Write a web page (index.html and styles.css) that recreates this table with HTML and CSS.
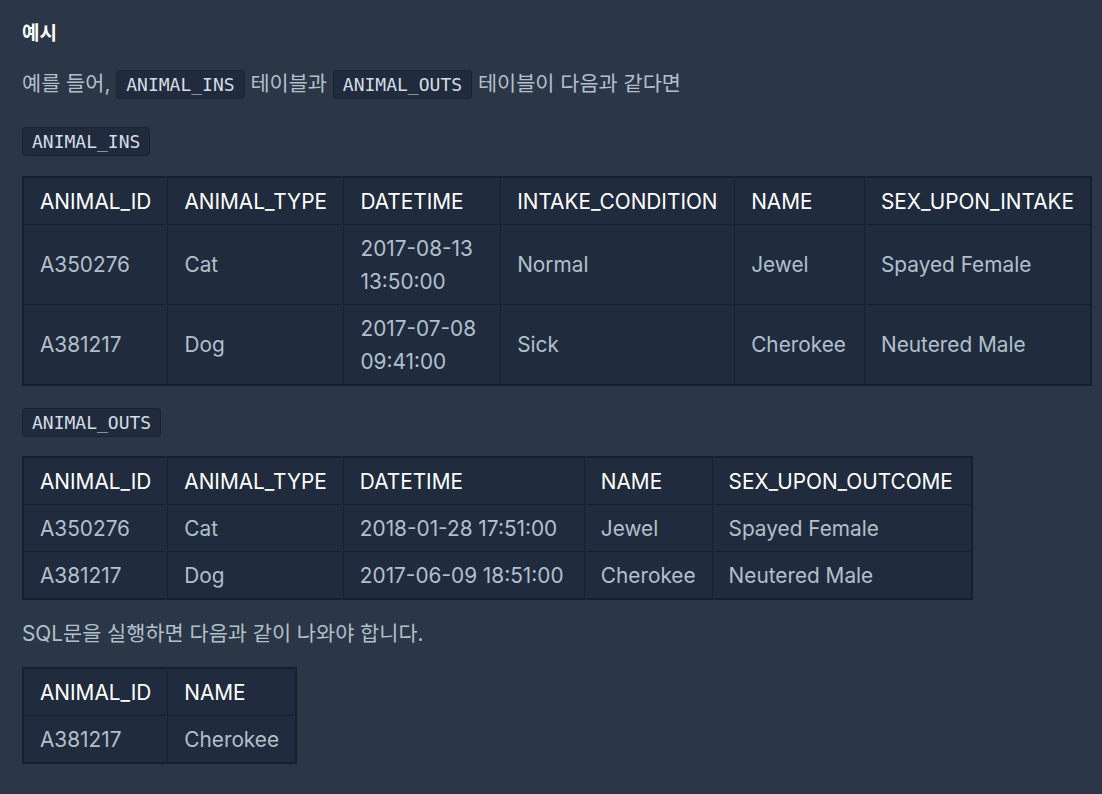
FILE: index.html
```html
<!DOCTYPE html>
<html lang="ko">
<head>
<meta charset="utf-8">
<link rel="stylesheet" href="styles.css">
</head>
<body>
<div class="content">
  <h5 class="heading">예시</h5>
  <p class="para">예를 들어, <code class="code">ANIMAL_INS</code> 테이블과 <code class="code">ANIMAL_OUTS</code> 테이블이 다음과 같다면</p>
  <p class="label"><code class="code">ANIMAL_INS</code></p>
  <table class="tbl tbl-wide">
    <colgroup>
      <col class="c-id"><col class="c-type"><col class="c-date"><col class="c-cond"><col class="c-name"><col class="c-sex">
    </colgroup>
    <thead>
      <tr><th>ANIMAL_ID</th><th>ANIMAL_TYPE</th><th>DATETIME</th><th>INTAKE_CONDITION</th><th>NAME</th><th>SEX_UPON_INTAKE</th></tr>
    </thead>
    <tbody>
      <tr><td>A350276</td><td>Cat</td><td>2017-08-13 13:50:00</td><td>Normal</td><td>Jewel</td><td>Spayed Female</td></tr>
      <tr><td>A381217</td><td>Dog</td><td>2017-07-08 09:41:00</td><td>Sick</td><td>Cherokee</td><td>Neutered Male</td></tr>
    </tbody>
  </table>
  <p class="label"><code class="code">ANIMAL_OUTS</code></p>
  <table class="tbl tbl-outs">
    <thead>
      <tr><th>ANIMAL_ID</th><th>ANIMAL_TYPE</th><th class="w-date2">DATETIME</th><th>NAME</th><th class="w-sex2">SEX_UPON_OUTCOME</th></tr>
    </thead>
    <tbody>
      <tr><td>A350276</td><td>Cat</td><td>2018-01-28 17:51:00</td><td>Jewel</td><td>Spayed Female</td></tr>
      <tr><td>A381217</td><td>Dog</td><td>2017-06-09 18:51:00</td><td>Cherokee</td><td>Neutered Male</td></tr>
    </tbody>
  </table>
  <p class="para para-sql">SQL문을 실행하면 다음과 같이 나와야 합니다.</p>
  <table class="tbl">
    <thead>
      <tr><th>ANIMAL_ID</th><th>NAME</th></tr>
    </thead>
    <tbody>
      <tr><td>A381217</td><td>Cherokee</td></tr>
    </tbody>
  </table>
</div>
</body>
</html>
```
FILE: styles.css
```css
html, body {
  margin: 0;
  padding: 0;
  background: #2b3646;
}
body {
  font-family: Inter, "Noto Sans CJK KR", sans-serif;
  color: #b2c0cc;
  font-size: 20.8px;
}
.content {
  padding: 20px 10px 30px 22px;
}
.heading {
  margin: 0 0 20px;
  font-size: 19px;
  font-weight: 700;
  color: #ffffff;
  line-height: 28px;
}
.para {
  margin: 0 0 25px;
  line-height: 32px;
}
.para-sql {
  margin: 0 0 17px;
}
.label {
  margin: 0 0 18px;
  line-height: 30px;
}
.code {
  font-family: "DejaVu Sans Mono", monospace;
  font-size: 18px;
  color: #d5dde5;
  background: #202b3d;
  border: 1px solid #1a2333;
  border-radius: 4px;
  padding: 3px 9px;
}
.tbl {
  border-collapse: collapse;
  background: #202b3d;
  border: 2px solid #172032;
  margin: 0 0 21px;
}
.tbl-outs {
  margin-bottom: 18px;
}
.tbl-wide {
  width: 100%;
  margin-top: 19px;
}
.c-id { width: 145px; }
.c-type { width: 176px; }
.c-date { width: 158px; }
.c-cond { width: 234px; }
.c-name { width: 130px; }
.c-sex { width: 226px; }
.w-date2 { width: 208px; }
.w-sex2 { width: 226px; }
.tbl th, .tbl td {
  border: 1px solid #172032;
  padding: 6.5px 16px;
  line-height: 33px;
  text-align: left;
  vertical-align: middle;
}
.tbl th {
  font-weight: 400;
  color: #ffffff;
}
.tbl td {
  color: #b2c0cc;
}
```
